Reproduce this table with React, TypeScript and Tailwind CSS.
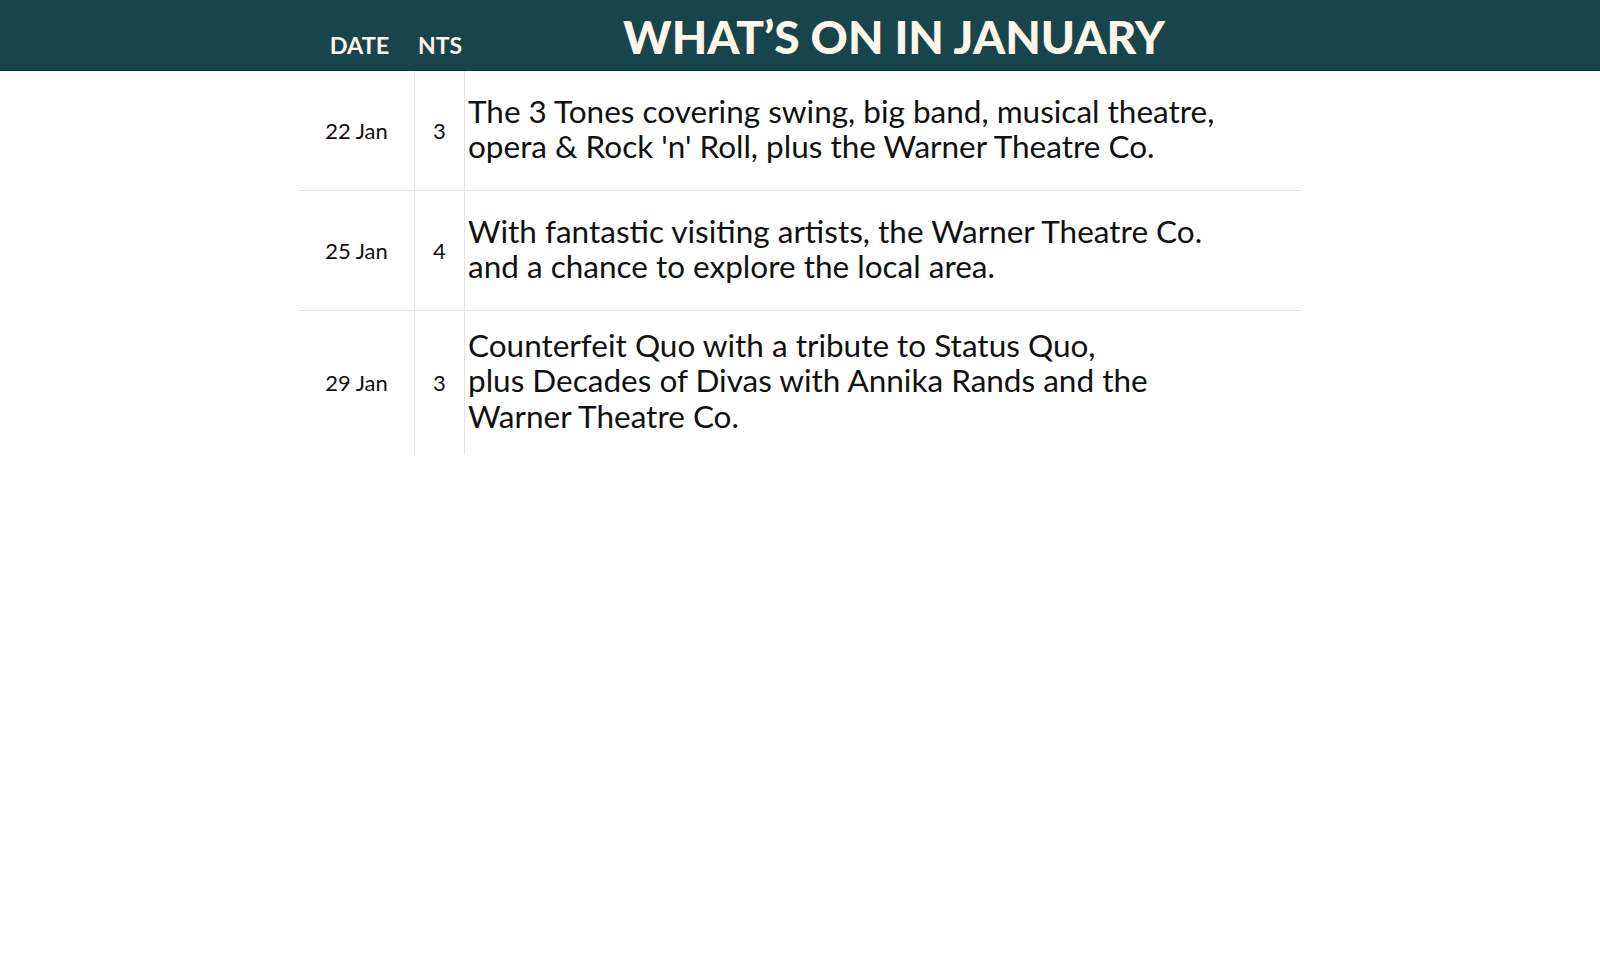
const rows = [
  {
    date: "22 Jan",
    nights: "3",
    lines: [
      "The 3 Tones covering swing, big band, musical theatre,",
      "opera & Rock 'n' Roll, plus the Warner Theatre Co.",
    ],
    h: "h-[120px]",
  },
  {
    date: "25 Jan",
    nights: "4",
    lines: [
      "With fantastic visiting artists, the Warner Theatre Co.",
      "and a chance to explore the local area.",
    ],
    h: "h-[120px]",
  },
  {
    date: "29 Jan",
    nights: "3",
    lines: [
      "Counterfeit Quo with a tribute to Status Quo,",
      "plus Decades of Divas with Annika Rands and the",
      "Warner Theatre Co.",
    ],
    h: "h-[143px]",
  },
];

const App = () => {
  return (
    <div className="min-h-[967px] w-full bg-white font-['Lato',sans-serif] text-[#111]">
      <div className="h-[71px] w-full bg-[#18454a] border-b border-[#0f3336]">
        <div className="ml-[299px] flex h-full w-[1002px] items-end text-[#fdf6ea]">
          <span className="w-[116px] pb-[13px] pl-[5px] text-center text-[23.5px] font-bold leading-none">
            DATE
          </span>
          <span className="w-[50px] pb-[13px] text-center text-[23px] font-bold leading-none">
            NTS
          </span>
          <h1 className="flex-1 pb-[10px] pl-[22px] text-center text-[46px] font-black leading-none">
            WHAT’S ON IN JANUARY
          </h1>
        </div>
      </div>

      <div className="ml-[299px] w-[1002px]">
        {rows.map((row, index) => (
          <div
            key={index}
            className={`flex ${row.h} ${
              index < rows.length - 1 ? "border-b border-[#e4e4e4]" : ""
            }`}
          >
            <div className="flex w-[116px] items-center justify-center border-r border-[#e4e4e4] text-[22px]">
              {row.date}
            </div>
            <div className="flex w-[50px] items-center justify-center border-r border-[#e4e4e4] text-[22px]">
              {row.nights}
            </div>
            <div className="flex flex-1 flex-col justify-center pb-[3px] pl-[3px] text-[31.5px] leading-[35.5px]">
              {row.lines.map((line, i) => (
                <p key={i} className="whitespace-nowrap">
                  {line}
                </p>
              ))}
            </div>
          </div>
        ))}
      </div>
    </div>
  );
};

export default App;
